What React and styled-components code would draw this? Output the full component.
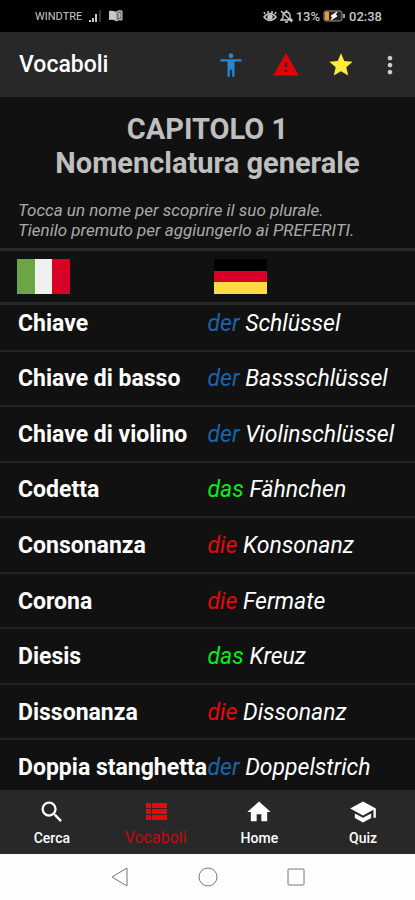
import React from "react";
import styled, { createGlobalStyle } from "styled-components";
import {
  MdAccessibility,
  MdWarning,
  MdStar,
  MdMoreVert,
  MdSearch,
  MdHome,
  MdSchool,
} from "react-icons/md";

const GlobalStyle = createGlobalStyle`
  * { box-sizing: border-box; }
  body { margin: 0; background: #111; font-family: Roboto, sans-serif; }
  button { border: 0; padding: 0; background: none; color: inherit; font: inherit; cursor: pointer; }
`;

const Screen = styled.div`
  display: flex;
  flex-direction: column;
  height: 100vh;
  overflow: hidden;
  background: #111;
  color: #fff;
`;

const StatusBar = styled.div`
  display: flex;
  flex: none;
  justify-content: space-between;
  height: 32px;
  padding: 0 33px 0 35px;
  background: #000;
  color: #c8c8c8;
`;

const StatusGroup = styled.div`
  display: flex;
  align-items: center;
  gap: ${(p) => p.$gap}px;
  font-size: ${(p) => p.$size}px;
  font-weight: ${(p) => p.$weight};

  svg { flex: none; }
`;

const AppBar = styled.header`
  display: flex;
  flex: none;
  align-items: center;
  height: 65px;
  padding: 0 17px 0 19px;
  background: #282828;
`;

const AppTitle = styled.h1`
  flex: 1;
  margin: 0;
  font-size: 23px;
  line-height: 28px;
  font-weight: 500;
`;

const Actions = styled.div`
  display: flex;
  align-items: center;
  gap: 27px;
`;

const IconButton = styled.button`
  display: flex;
  justify-content: center;
  width: ${(p) => p.$width || 28}px;
  color: ${(p) => p.$color};

  svg { flex: none; }
`;

const Intro = styled.section`
  flex: none;
  padding: 15px 18px 8px;
`;

const Chapter = styled.h2`
  margin: 0;
  color: #bfbfbf;
  font-size: 29px;
  line-height: 34px;
  font-weight: 700;
  text-align: center;
`;

const Hint = styled.p`
  margin: 20px 0 0;
  color: #aaa;
  font-size: 17px;
  line-height: 20px;
  font-style: italic;
`;

const Table = styled.table`
  display: flex;
  flex: 1;
  flex-direction: column;
  min-height: 0;
  overflow: hidden;
`;

const TableHead = styled.thead`
  display: block;
  z-index: 1;
  border: solid #292929;
  border-width: 3px 0;
  background: #111;
`;

const Row = styled.tr`
  display: grid;
  grid-template-columns: minmax(0, 1fr) minmax(0, 1fr);
  align-items: center;
`;

const FlagCell = styled.th`
  display: flex;
  height: 51px;
  align-items: center;
  padding: 0 0 0 ${(p) => p.$inset}px;
`;

/* The list is scrolled a little way under its header and the navigation. */
const TableBody = styled.tbody`
  display: grid;
  flex: 1;
  grid-auto-rows: 1fr;
  margin: -9px 0 -6px;
`;

const WordRow = styled(Row)`
  padding-top: 2px;
  border-bottom: 2px solid #232323;
  font-size: 23px;
  line-height: 28px;
  white-space: nowrap;
`;

const Italian = styled.th`
  padding: 0 0 0 18px;
  font-weight: 700;
  text-align: left;
`;

const German = styled.td`
  padding: 0;
  font-style: italic;
`;

const articleColors = { der: "#1a64ab", die: "#e00b0b", das: "#0cec18" };

const Article = styled.span`
  color: ${(p) => articleColors[p.$article]};
`;

const BottomNav = styled.nav`
  display: grid;
  flex: none;
  grid-template-columns: repeat(4, 1fr);
  height: 64px;
  background: #282828;
`;

const NavLink = styled.a`
  display: flex;
  flex-direction: column;
  align-items: center;
  padding-top: 8px;
  color: ${(p) => (p.$active ? "#c50a0e" : "#fff")};
  font-size: ${(p) => (p.$active ? 16 : 14)}px;
  line-height: 20px;
  font-weight: ${(p) => (p.$active ? 400 : 500)};
  text-decoration: none;

  svg { margin-bottom: 2px; color: ${(p) => (p.$active ? "#f00505" : "#fff")}; }
`;

const SystemBar = styled.div`
  display: flex;
  flex: none;
  align-items: center;
  justify-content: center;
  gap: 68px;
  height: 46px;
  background: #fdfdfd;
  color: #777;
`;

const SystemButton = styled.button`
  display: flex;
`;

const words = [
  ["Chiave", "der", "Schlüssel"],
  ["Chiave di basso", "der", "Bassschlüssel"],
  ["Chiave di violino", "der", "Violinschlüssel"],
  ["Codetta", "das", "Fähnchen"],
  ["Consonanza", "die", "Konsonanz"],
  ["Corona", "die", "Fermate"],
  ["Diesis", "das", "Kreuz"],
  ["Dissonanza", "die", "Dissonanz"],
  ["Doppia stanghetta", "der", "Doppelstrich"],
];

const ListIcon = ({ size }) => (
  <svg width={size} height={size} viewBox="0 0 28 28" fill="currentColor" aria-hidden="true">
    <path d="M4 5h5v5H4zM10 5h15v5H10zM4 11h5v5H4zM10 11h15v5H10zM4 17h5v5H4zM10 17h15v5H10z" />
  </svg>
);

const tabs = [
  { label: "Cerca", Icon: MdSearch },
  { label: "Vocaboli", Icon: ListIcon, active: true },
  { label: "Home", Icon: MdHome },
  { label: "Quiz", Icon: MdSchool },
];

const SignalIcon = () => (
  <svg width="13" height="12" viewBox="0 0 13 12" fill="currentColor" aria-hidden="true">
    <path d="M0 10h2v2H0zM3 8h2v4H3zM6 4h2v8H6z" />
    <path d="M10 0h2v12h-2z" opacity=".25" />
  </svg>
);

const BookIcon = () => (
  <svg width="14" height="12" viewBox="0 0 14 12" aria-hidden="true">
    <path d="M0 1q4-1 7 1v9q-3-2-7-1z" fill="currentColor" />
    <path d="M7 2q3-2 6-1v9q-3-1-6 1z" fill="#777" stroke="currentColor" />
    <path d="M9 4q2-1 2 1l-1 2v1" fill="none" stroke="#ddd" />
  </svg>
);

const EyeIcon = () => (
  <svg width="14" height="13" viewBox="0 0 14 13" fill="none" stroke="currentColor" strokeWidth="1.5" aria-hidden="true">
    <path d="M1 7q6-7 12 0q-6 7-12 0zM2 4L1 2M5 3V1M9 3V1M12 4l1-2" />
    <circle cx="7" cy="7" r="2" fill="currentColor" />
  </svg>
);

const MutedBellIcon = () => (
  <svg width="13" height="13" viewBox="0 0 13 13" fill="none" stroke="currentColor" strokeWidth="1.4" aria-hidden="true">
    <path d="M1 10h11l-2-2V5Q9 2 6.500 2T3 5v3zM5 12h3M6.500 2V0M1 1l11 11" />
  </svg>
);

const BatteryIcon = () => (
  <svg width="23" height="12" viewBox="0 0 23 12" aria-hidden="true">
    <rect x="1" y="1" width="18" height="10" rx="2" fill="#222" stroke="#999" />
    <rect x="2" y="2" width="4" height="8" fill="#f79a27" />
    <path d="M14 2L8 6l2 1-2 3 6-4-2-1z" fill="#fff" stroke="#fff" />
    <path d="M20 4h2v4h-2z" fill="#999" />
  </svg>
);

const ItalianFlag = () => (
  <svg width="53" height="35" viewBox="0 0 53 35" role="img" aria-label="Italiano">
    <path fill="#6da544" d="M0 0h18v35H0z" />
    <path fill="#f0f0f0" d="M18 0h17v35H18z" />
    <path fill="#d80027" d="M35 0h18v35H35z" />
  </svg>
);

const GermanFlag = () => (
  <svg width="53" height="35" viewBox="0 0 53 35" role="img" aria-label="Deutsch">
    <path fill="#000" d="M0 0h53v12H0z" />
    <path fill="#d80027" d="M0 12h53v11H0z" />
    <path fill="#ffda44" d="M0 23h53v12H0z" />
  </svg>
);

export default function App() {
  return (
    <Screen>
      <GlobalStyle />
      <StatusBar>
        <StatusGroup $gap={7} $size={11} $weight={400}>
          <span>WINDTRE</span>
          <SignalIcon />
          <BookIcon />
        </StatusGroup>
        <StatusGroup $gap={3} $size={13} $weight={500}>
          <EyeIcon />
          <MutedBellIcon />
          <span>13%</span>
          <BatteryIcon />
          <span>02:38</span>
        </StatusGroup>
      </StatusBar>

      <AppBar>
        <AppTitle>Vocaboli</AppTitle>
        <Actions>
          <IconButton $color="#2388d8" aria-label="Accessibilità"><MdAccessibility size={28} /></IconButton>
          <IconButton $color="#e00404" aria-label="Avvisi"><MdWarning size={28} /></IconButton>
          <IconButton $color="#ffeb3b" aria-label="Preferiti"><MdStar size={28} /></IconButton>
          <IconButton $color="#ccc" $width={16} aria-label="Altro"><MdMoreVert size={28} /></IconButton>
        </Actions>
      </AppBar>

      <Intro>
        <Chapter>CAPITOLO 1<br />Nomenclatura generale</Chapter>
        <Hint>
          Tocca un nome per scoprire il suo plurale.<br />
          Tienilo premuto per aggiungerlo ai PREFERITI.
        </Hint>
      </Intro>

      <Table>
        <TableHead>
          <Row>
            <FlagCell scope="col" $inset={17}><ItalianFlag /></FlagCell>
            <FlagCell scope="col" $inset={6}><GermanFlag /></FlagCell>
          </Row>
        </TableHead>
        <TableBody>
          {words.map(([italian, article, noun]) => (
            <WordRow key={italian}>
              <Italian scope="row">{italian}</Italian>
              <German><Article $article={article}>{article}</Article> {noun}</German>
            </WordRow>
          ))}
        </TableBody>
      </Table>

      <BottomNav>
        {tabs.map(({ label, Icon, active }) => (
          <NavLink key={label} href="#" $active={active} aria-current={active ? "page" : undefined}>
            <Icon size={28} />
            {label}
          </NavLink>
        ))}
      </BottomNav>

      <SystemBar>
        <SystemButton aria-label="Indietro">
          <svg width="20" height="20" viewBox="0 0 20 20" fill="none" stroke="currentColor" strokeLinejoin="round">
            <path d="M17 1v18L2 10z" />
          </svg>
        </SystemButton>
        <SystemButton aria-label="Schermata principale">
          <svg width="20" height="20" viewBox="0 0 20 20" fill="none" stroke="currentColor">
            <circle cx="10" cy="10" r="9" />
          </svg>
        </SystemButton>
        <SystemButton aria-label="App recenti">
          <svg width="20" height="20" viewBox="0 0 20 20" fill="none" stroke="currentColor">
            <rect x="2" y="2" width="16" height="16" rx="1" />
          </svg>
        </SystemButton>
      </SystemBar>
    </Screen>
  );
}
